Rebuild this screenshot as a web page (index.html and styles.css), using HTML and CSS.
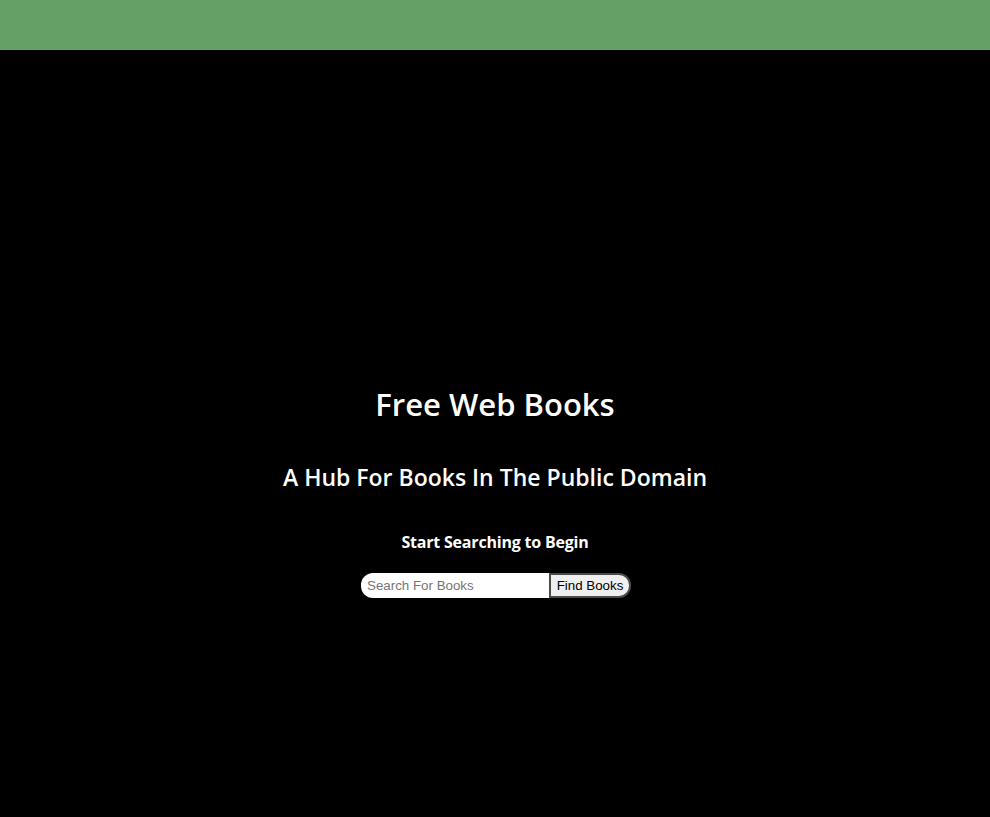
FILE: index.html
```html
<!DOCTYPE html>
<html lang="en">
<head>
<meta charset="utf-8">
<title>Free Web Books</title>
<link rel="stylesheet" href="styles.css">
</head>
<body>
<header class="topbar"></header>
<main class="hero">
  <h1 class="title">Free Web Books</h1>
  <h2 class="subtitle">A Hub For Books In The Public Domain</h2>
  <h4 class="prompt">Start Searching to Begin</h4>
  <form class="search">
    <input class="search-input" type="text" placeholder="Search For Books">
    <button class="search-btn" type="button">Find Books</button>
  </form>
</main>
</body>
</html>
```

FILE: styles.css
```css
html, body {
  margin: 0;
  padding: 0;
  background: #000;
  height: 100%;
}
body {
  font-family: "Open Sans", "Noto Sans", sans-serif;
  color: #fff;
}
.topbar {
  height: 50px;
  background: #65a166;
}
.hero {
  display: flex;
  flex-direction: column;
  align-items: center;
  padding-top: 334px;
}
.title {
  font-size: 31px;
  font-weight: 600;
  line-height: 40px;
  margin: 0;
}
.subtitle {
  font-size: 23px;
  font-weight: 600;
  line-height: 30px;
  margin: 38px 0 0;
}
.prompt {
  font-size: 16px;
  font-weight: 700;
  letter-spacing: -0.2px;
  line-height: 20px;
  margin: 40px 0 0;
}
.search {
  display: flex;
  margin-top: 21px;
  padding-left: 2px;
}
.search-input {
  box-sizing: border-box;
  width: 188px;
  height: 25px;
  border: none;
  border-radius: 12px 0 0 12px;
  background: #fff;
  padding: 0 6px;
  font-family: "Liberation Sans", Arial, sans-serif;
  font-size: 13.33px;
  color: #000;
}
.search-input::placeholder {
  color: #757575;
}
.search-btn {
  box-sizing: border-box;
  height: 25px;
  width: 82px;
  border: 2px solid #4a4a4a;
  border-radius: 0 12px 12px 0;
  background: #efefef;
  font-family: "Liberation Sans", Arial, sans-serif;
  font-size: 13.33px;
  color: #000;
  padding: 0 4px;
}
```
